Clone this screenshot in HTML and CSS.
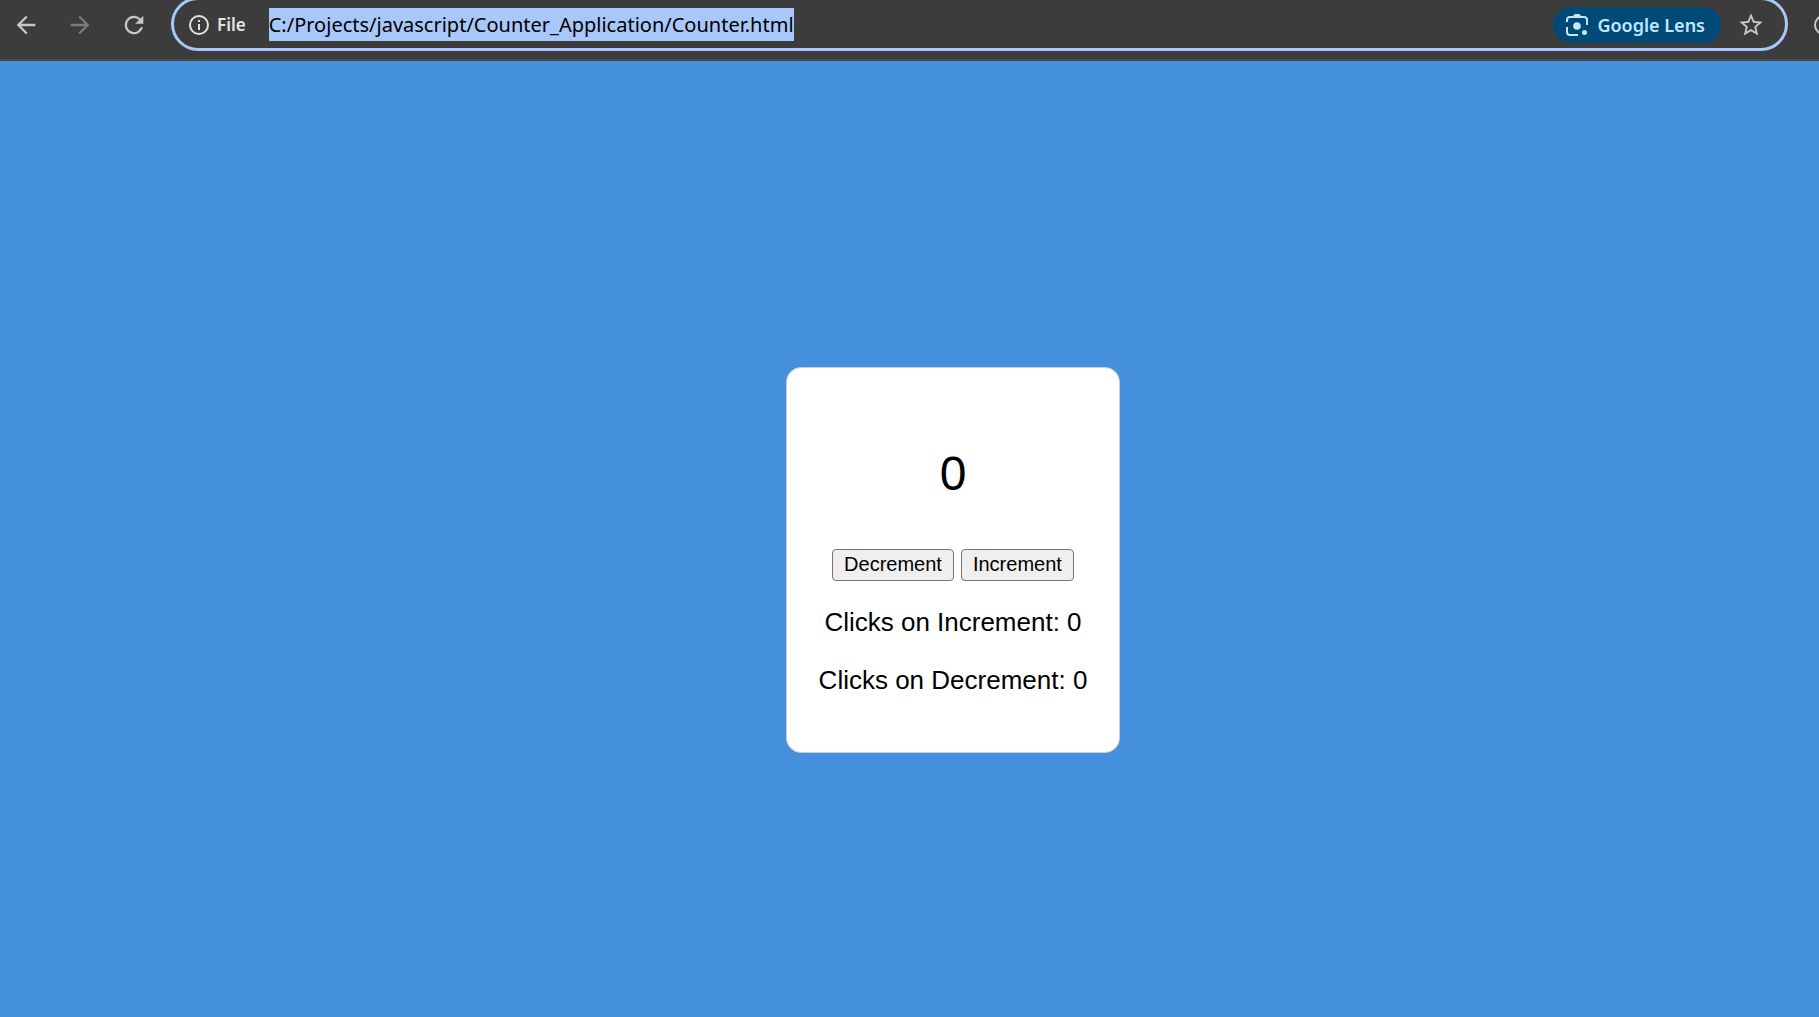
FILE: index.html
```html
<!DOCTYPE html>
<html lang="en">
<head>
<meta charset="utf-8">
<title>Counter</title>
<link rel="stylesheet" href="styles.css">
</head>
<body>
<header class="toolbar">
  <nav class="nav">
    <button class="icon-btn" type="button" aria-label="Back">
      <svg class="icon" viewBox="0 0 24 24"><path d="M20 11H7.8l5.6-5.6L12 4l-8 8 8 8 1.4-1.4L7.8 13H20z"/></svg>
    </button>
    <button class="icon-btn icon-btn-off" type="button" aria-label="Forward">
      <svg class="icon" viewBox="0 0 24 24"><path d="M12 4l-1.4 1.4 5.6 5.6H4v2h12.200l-5.600 5.600L12 20l8-8z"/></svg>
    </button>
    <button class="icon-btn" type="button" aria-label="Reload">
      <svg class="icon" viewBox="0 0 24 24"><path d="M17.650 6.350A7.960 7.960 0 0 0 12 4a8 8 0 1 0 7.750 10h-2.080A6 6 0 1 1 12 6c1.660 0 3.140.690 4.220 1.780L13 11h7V4z"/></svg>
    </button>
  </nav>
  <form class="omnibox">
    <button class="file-btn" type="button">
      <svg class="info" viewBox="0 0 20 20"><circle cx="10" cy="10" r="9" fill="none" stroke="currentColor" stroke-width="2"/><path d="M9 9h2v6H9zM9 5h2v2H9z"/></svg>
      File
    </button>
    <input class="url" type="text" aria-label="Address" value="C:/Projects/javascript/Counter_Application/Counter.html">
    <button class="lens" type="button">
      <svg class="lens-icon" viewBox="0 0 22 22"><g fill="none" stroke="currentColor" stroke-width="2"><path d="M1 8V6a3 3 0 0 1 3-3h14a3 3 0 0 1 3 3v5M1 13v5a3 3 0 0 0 3 3h8"/></g><path d="M7 2l1.500-2h5L15 2z"/><circle cx="11" cy="12" r="3.800"/><circle cx="18.500" cy="18.500" r="2.500"/></svg>
      Google Lens
    </button>
    <button class="star-btn" type="button" aria-label="Bookmark this page">
      <svg class="icon" viewBox="0 0 24 24"><path d="M22 9.240l-7.190-.620L12 2 9.190 8.630 2 9.240l5.460 4.730L5.820 21 12 17.270 18.180 21l-1.630-7.030zM12 15.400l-3.760 2.270 1-4.280-3.320-2.880 4.380-.380L12 6.100l1.710 4.040 4.380.380-3.320 2.880 1 4.280z"/></svg>
    </button>
  </form>
  <button class="more" type="button" aria-label="Extensions">
    <svg class="info" viewBox="0 0 20 20"><circle cx="10" cy="10" r="9" fill="none" stroke="currentColor" stroke-width="2"/></svg>
  </button>
</header>
<main class="page">
  <section class="card">
    <p class="count">0</p>
    <div class="actions">
      <button class="btn" type="button">Decrement</button>
      <button class="btn" type="button">Increment</button>
    </div>
    <p class="clicks">Clicks on Increment: 0</p>
    <p class="clicks">Clicks on Decrement: 0</p>
  </section>
</main>
</body>
</html>
```
FILE: styles.css
```css
* { box-sizing: border-box; }

body {
  margin: 0;
  min-height: 100vh;
  display: flex;
  flex-direction: column;
  overflow: hidden;
  background: #4590dc;
  font-family: "Liberation Sans", Arial, sans-serif;
  color: #000;
}

button {
  font: inherit;
  color: inherit;
}

svg {
  display: block;
  fill: currentColor;
  flex: none;
}

/* Browser toolbar */
.toolbar {
  display: flex;
  align-items: flex-start;
  height: 61px;
  flex: none;
  padding-left: 12px;
  background: #3c3c3c;
  border-bottom: 2px solid #474747;
  color: #c7c7c7;
  font-family: "Noto Sans", "Segoe UI", sans-serif;
}

.nav {
  display: flex;
  gap: 26px;
  padding-top: 11px;
}

.icon-btn,
.star-btn,
.file-btn,
.more {
  border: 0;
  padding: 0;
  background: none;
}

.icon-btn { width: 28px; }
.icon-btn-off { color: #7b7b7b; }

.icon {
  width: 28px;
  height: 28px;
}

.omnibox {
  flex: 1;
  display: flex;
  align-items: center;
  height: 54px;
  margin: -3px 0 0 23px;
  padding: 1px 20px 0 15px;
  border: 3px solid #a8c7fa;
  border-radius: 27px;
}

.file-btn {
  display: flex;
  align-items: center;
  gap: 8px;
  margin-right: 23px;
  font-size: 17px;
  font-weight: 600;
  color: #e3e3e3;
}

.info {
  width: 20px;
  height: 20px;
}

.url {
  field-sizing: content;
  height: 33px;
  margin-right: auto;
  padding: 0;
  border: 0;
  outline: 0;
  background: #a8c7fa;
  color: #000;
  font-family: "Noto Sans", "Segoe UI", sans-serif;
  font-size: 20px;
}

.lens {
  display: flex;
  align-items: center;
  gap: 9px;
  height: 36px;
  margin-right: 16px;
  padding: 0 16px 0 13px;
  border: 0;
  border-radius: 18px;
  background: #004a77;
  color: #c2e7ff;
  font-size: 18px;
  font-weight: 600;
}

.lens-icon {
  width: 22px;
  height: 22px;
}

.more {
  width: 5px;
  margin: 15px 0 0 26px;
  overflow: hidden;
}

/* Counter */
.page {
  flex: 1;
  display: flex;
  align-items: center;
  justify-content: center;
  padding: 42px 0 0 87px;
}

.card {
  padding: 79px 32px 57px;
  border: 1px solid #ccc;
  border-radius: 15px;
  background: #fff;
  text-align: center;
}

.count {
  margin: 0;
  font-size: 48px;
  line-height: 54px;
}

.actions {
  display: flex;
  justify-content: center;
  gap: 7px;
  margin-top: 48px;
}

.btn {
  height: 32px;
  padding: 0 11px 2px;
  border: 1px solid #767676;
  border-radius: 4px;
  background: #efefef;
  font-size: 20px;
  line-height: 28px;
}

.clicks {
  margin: 28px 0 0;
  font-size: 26px;
  line-height: 30px;
}

.actions + .clicks { margin-top: 26px; }
```
